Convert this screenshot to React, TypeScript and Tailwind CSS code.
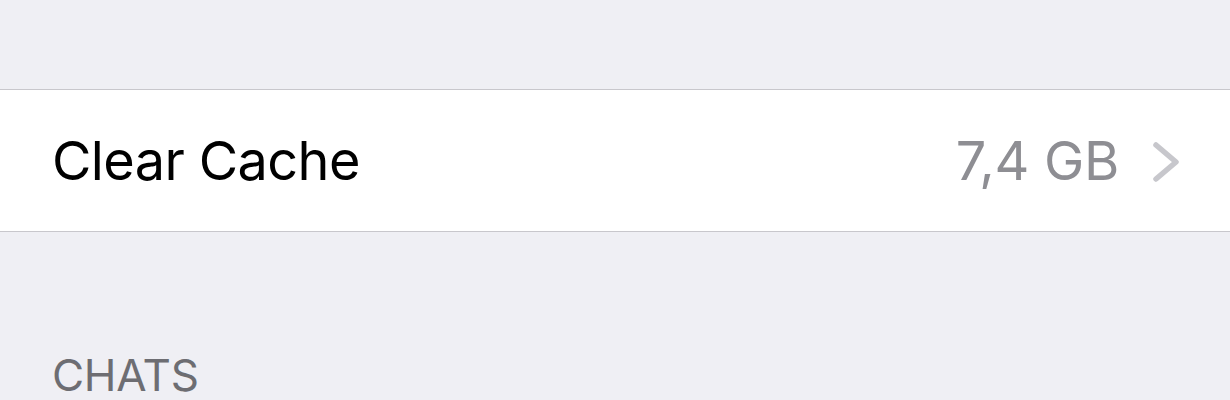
import React from "react";

export default function App() {
  return (
    <div
      className="w-[1230px] h-[400px] overflow-hidden bg-[#efeff4] flex flex-col"
      style={{ fontFamily: "Inter, 'Liberation Sans', sans-serif" }}
    >
      <div className="h-[89px] shrink-0" />
      <div className="h-[143px] shrink-0 bg-white border-y-[1.5px] border-[#c8c7cc] flex items-center pl-[52px] pr-[48px]">
        <span className="text-[54px] text-black tracking-[-0.6px] leading-none">Clear Cache</span>
        <div className="ml-auto flex items-center gap-[33px]">
          <span className="text-[54px] text-[#8e8e93] tracking-[-0.3px] leading-none">7,4 GB</span>
          <svg width="30" height="42" viewBox="0 0 30 42" className="mt-[2px]">
            <path d="M4 4 L24 21 L4 38" fill="none" stroke="#c7c7cc" strokeWidth="5.5" strokeLinecap="round" strokeLinejoin="round" />
          </svg>
        </div>
      </div>
      <div className="flex-1 flex items-end pl-[52px] pb-[3px]">
        <span className="text-[44px] text-[#6d6d72] tracking-[-0.3px] leading-none">CHATS</span>
      </div>
    </div>
  );
}
